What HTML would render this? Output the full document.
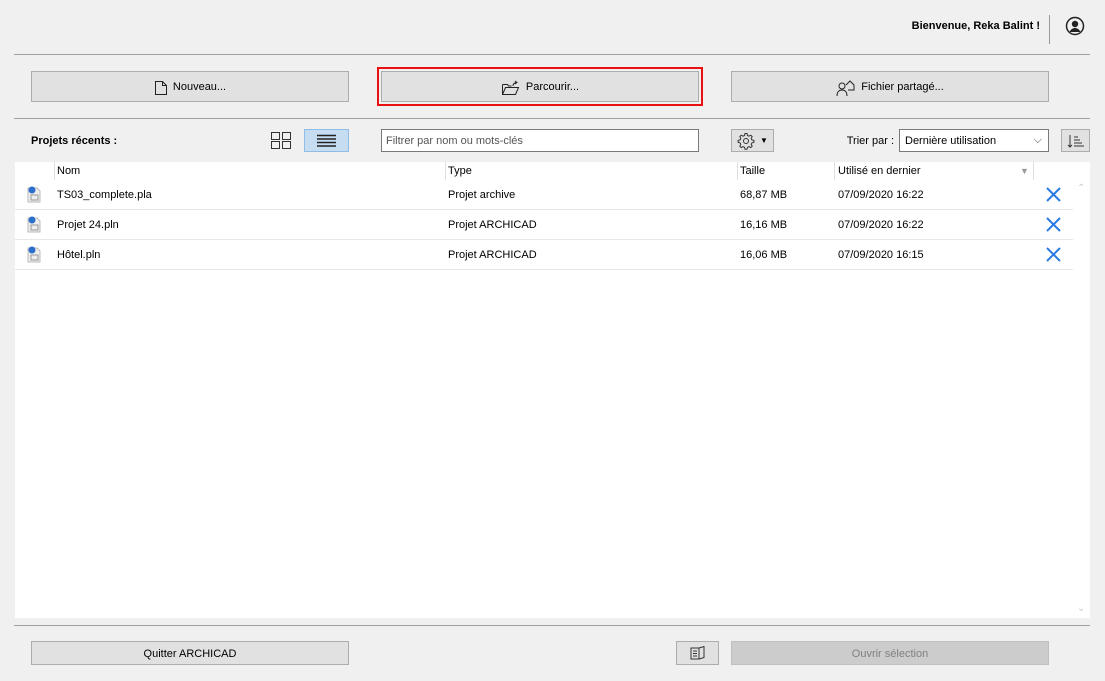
<!DOCTYPE html>
<html><head><meta charset="utf-8"><style>
*{box-sizing:border-box;margin:0;padding:0}
body{width:1105px;height:681px;background:#f0f0f0;font-family:"Liberation Sans",sans-serif;font-size:11px;line-height:15px;color:#000;position:relative;overflow:hidden}
.a{position:absolute}
.btn{position:absolute;background:#e1e1e1;border:1px solid #adadad;display:flex;align-items:center;justify-content:center;gap:5px;padding-top:2px}
.hl{position:absolute;height:1px;background:#a0a0a0}
.row{position:absolute;left:15px;width:1058px;height:30px;border-bottom:1px solid #e8e8e8}
.row span{position:absolute;top:8px}
.x{top:7px!important;left:1031px}
</style></head><body>
<div class="a" style="right:65px;top:19px;font-weight:bold">Bienvenue, Reka Balint !</div>
<div class="a" style="left:1049px;top:15px;width:1px;height:29px;background:#999"></div>
<svg class="a" style="left:1065px;top:16px" width="20" height="20" viewBox="0 0 20 20"><circle cx="10" cy="10" r="8.5" fill="none" stroke="#222" stroke-width="1.5"/><circle cx="10" cy="8" r="3.2" fill="#222"/><path d="M4.5 16c1.5-3 3.5-4 5.5-4s4 1 5.5 4" fill="#222"/></svg>
<div class="hl" style="left:14px;top:54px;width:1076px"></div>
<div class="btn" style="left:31px;top:71px;width:318px;height:31px"><svg width="14" height="16" viewBox="0 0 14 16"><path d="M1.5 1.5h7l4 4v9h-11z M8.5 1.5v4h4" fill="none" stroke="#222"/></svg>Nouveau...</div>
<div class="a" style="left:377px;top:67px;width:326px;height:39px;border:2px solid #e81010"></div>
<div class="btn" style="left:381px;top:71px;width:318px;height:31px"><svg width="20" height="16" viewBox="0 0 20 16"><path d="M1.5 4.5h5l1 1.5h3M1.5 4.5v10h13l3-7h-13l-3 7" fill="none" stroke="#222"/><path d="M12 6c0-2 1-3 3-3.5M14 1l2 1.5-2 1.5" fill="none" stroke="#222"/></svg>Parcourir...</div>
<div class="btn" style="left:731px;top:71px;width:318px;height:31px"><svg width="20" height="18" viewBox="0 0 20 18"><circle cx="6" cy="7" r="3" fill="none" stroke="#222"/><path d="M1 17c0-4 2-6 5-6s5 2 5 6M10 6l4-4 4 4v5h-6" fill="none" stroke="#222"/></svg>Fichier partagé...</div>
<div class="hl" style="left:14px;top:118px;width:1076px"></div>
<div class="a" style="left:31px;top:134px;font-weight:bold">Projets récents :</div>
<svg class="a" style="left:271px;top:132px" width="21" height="18"><rect x="0.5" y="0.5" width="8" height="7" fill="none" stroke="#333"/><rect x="11.5" y="0.5" width="8" height="7" fill="none" stroke="#333"/><rect x="0.5" y="9.5" width="8" height="7" fill="none" stroke="#333"/><rect x="11.5" y="9.5" width="8" height="7" fill="none" stroke="#333"/></svg>
<div class="a" style="left:304px;top:129px;width:45px;height:23px;background:#c5dcf1;border:1px solid #90bde6"></div>
<svg class="a" style="left:317px;top:134px" width="19" height="13"><path d="M0 1.5h19M0 5h19M0 8.5h19M0 12h19" stroke="#222" stroke-width="1.6"/></svg>
<div class="a" style="left:381px;top:129px;width:318px;height:23px;background:#fff;border:1px solid #7a7a7a;padding:4px 4px;color:#555">Filtrer par nom ou mots-clés</div>
<div class="btn" style="left:731px;top:129px;width:43px;height:23px;padding-top:0"><svg width="18" height="18" viewBox="0 0 18 18"><circle cx="9" cy="9" r="2.5" fill="none" stroke="#333"/><path d="M8 1.5h2l.5 2 1.5.7 1.8-1 1.4 1.4-1 1.8.7 1.5 2 .5v2l-2 .5-.7 1.5 1 1.8-1.4 1.4-1.8-1-1.5.7-.5 2h-2l-.5-2-1.5-.7-1.8 1-1.4-1.4 1-1.8-.7-1.5-2-.5v-2l2-.5.7-1.5-1-1.8 1.4-1.4 1.8 1 1.5-.7z" fill="none" stroke="#333"/></svg><span style="font-size:8px">▼</span></div>
<div class="a" style="right:211px;top:134px">Trier par :</div>
<div class="a" style="left:899px;top:129px;width:150px;height:23px;background:#fff;border:1px solid #7a7a7a;padding:4px 5px">Dernière utilisation<span style="position:absolute;right:6px;top:3px;color:#444">⌵</span></div>
<div class="btn" style="left:1061px;top:129px;width:29px;height:23px;padding-top:0"><svg width="18" height="14"><path d="M3 1v12M1 11l2 2 2-2M7 3h4M7 6h6M7 9h8M7 12h10" stroke="#333" fill="none"/></svg></div>
<div class="a" style="left:15px;top:162px;width:1075px;height:456px;background:#fff"></div>
<div class="a" style="left:15px;top:162px;width:1058px;height:18px">
<span class="a" style="left:39px;top:0;width:1px;height:18px;background:#e0e0e0"></span>
<span class="a" style="left:42px;top:2px">Nom</span>
<span class="a" style="left:430px;top:0;width:1px;height:18px;background:#e0e0e0"></span>
<span class="a" style="left:433px;top:2px">Type</span>
<span class="a" style="left:722px;top:0;width:1px;height:18px;background:#e0e0e0"></span>
<span class="a" style="left:725px;top:2px">Taille</span>
<span class="a" style="left:819px;top:0;width:1px;height:18px;background:#e0e0e0"></span>
<span class="a" style="left:823px;top:2px">Utilisé en dernier</span>
<span class="a" style="left:1005px;top:2px;color:#999;font-size:9px">▼</span>
<span class="a" style="left:1018px;top:0;width:1px;height:18px;background:#e0e0e0"></span>
</div>
<div class="row" style="top:180px"><span style="left:12px;top:5px"><svg width="14" height="18"><path d="M1 3h9l3 3v11H1z" fill="#eee" stroke="#bbb"/><circle cx="5" cy="5" r="3.5" fill="#2a6fc9"/><rect x="4" y="10" width="7" height="5" fill="none" stroke="#999"/></svg></span><span style="left:42px">TS03_complete.pla</span><span style="left:433px">Projet archive</span><span style="left:725px">68,87 MB</span><span style="left:823px">07/09/2020 16:22</span><span class="x"><svg width="15" height="15"><path d="M1 1l13 13M14 1L1 14" stroke="#2a7be4" stroke-width="2"/></svg></span></div>
<div class="row" style="top:210px"><span style="left:12px;top:5px"><svg width="14" height="18"><path d="M1 3h9l3 3v11H1z" fill="#eee" stroke="#bbb"/><circle cx="5" cy="5" r="3.5" fill="#2a6fc9"/><rect x="4" y="10" width="7" height="5" fill="none" stroke="#999"/></svg></span><span style="left:42px">Projet 24.pln</span><span style="left:433px">Projet ARCHICAD</span><span style="left:725px">16,16 MB</span><span style="left:823px">07/09/2020 16:22</span><span class="x"><svg width="15" height="15"><path d="M1 1l13 13M14 1L1 14" stroke="#2a7be4" stroke-width="2"/></svg></span></div>
<div class="row" style="top:240px"><span style="left:12px;top:5px"><svg width="14" height="18"><path d="M1 3h9l3 3v11H1z" fill="#eee" stroke="#bbb"/><circle cx="5" cy="5" r="3.5" fill="#2a6fc9"/><rect x="4" y="10" width="7" height="5" fill="none" stroke="#999"/></svg></span><span style="left:42px">Hôtel.pln</span><span style="left:433px">Projet ARCHICAD</span><span style="left:725px">16,06 MB</span><span style="left:823px">07/09/2020 16:15</span><span class="x"><svg width="15" height="15"><path d="M1 1l13 13M14 1L1 14" stroke="#2a7be4" stroke-width="2"/></svg></span></div>
<div class="a" style="left:1077px;top:181px;color:#ccc;font-size:10px">⌃</div>
<div class="a" style="left:1077px;top:601px;color:#ccc;font-size:10px">⌄</div>
<div class="hl" style="left:14px;top:625px;width:1076px"></div>
<div class="btn" style="left:31px;top:641px;width:318px;height:24px">Quitter ARCHICAD</div>
<div class="btn" style="left:676px;top:641px;width:43px;height:24px;padding-top:0"><svg width="16" height="14"><path d="M1 2h8v11H1zM9 2l5-1.5v11L9 13M3 5h4M3 7.5h4M3 10h4" fill="none" stroke="#333"/></svg></div>
<div class="btn" style="left:731px;top:641px;width:318px;height:24px;background:#cccccc;border-color:#bfbfbf;color:#808080">Ouvrir sélection</div>
</body></html>
